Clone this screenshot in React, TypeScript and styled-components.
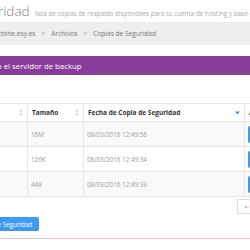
import { FC } from "react";
import styled, { createGlobalStyle } from "styled-components";

const GlobalStyle = createGlobalStyle`
  html, body {
    margin: 0;
    padding: 0;
    background: #fff;
    overflow: hidden;
  }
  body {
    font-family: "Open Sans", "DejaVu Sans", sans-serif;
    color: #555;
  }
`;

type Backup = {
  name: string;
  size: string;
  date: string;
};

const backups: Backup[] = [
  { name: "backup_full.tar.gz", size: "16M", date: "08/03/2016 12:49:56" },
  { name: "backup_db.sql.gz", size: "126K", date: "08/03/2016 12:49:34" },
  { name: "backup_mail.tar", size: "448", date: "08/03/2016 12:49:33" },
];

const Page = styled.div`
  margin-left: -95px;
  width: 440px;
`;

const TitleRow = styled.div`
  display: flex;
  align-items: baseline;
  gap: 5px;
  height: 22px;
  white-space: nowrap;
`;

const Title = styled.h1`
  margin: 0;
  font-size: 13.5px;
  line-height: 22px;
  font-weight: 300;
  color: #7d7d7d;
`;

const Subtitle = styled.span`
  font-size: 6.4px;
  color: #aaa;
`;

const Breadcrumb = styled.ol`
  display: flex;
  align-items: center;
  margin: 0;
  padding: 0 0 0 43px;
  height: 23px;
  list-style: none;
  background: #eeeeee;
  font-size: 6.6px;
  color: #777;
  white-space: nowrap;
`;

const Crumb = styled.li`
  & + &::before {
    content: ">";
    padding: 0 6px;
    color: #999;
  }
`;

const Panel = styled.section`
  margin-top: 11px;
  border: 1px solid #dec3e5;
  border-top: none;
`;

const PanelHeading = styled.div`
  height: 19px;
  display: flex;
  align-items: center;
  padding-left: 17px;
  background: #8a3c9a;
  color: #fff;
  font-size: 7.8px;
  white-space: nowrap;
`;

const PanelBody = styled.div`
  padding: 28px 7px 7px;
`;

const Table = styled.table`
  border-collapse: collapse;
  table-layout: fixed;
  width: 391px;
  font-size: 6.3px;
`;

const Th = styled.th`
  padding: 0 4px;
  height: 17px;
  border: 1px solid #e6e6e6;
  text-align: left;
  font-weight: 700;
  color: #333;
  font-size: 6.5px;
`;

const ThInner = styled.div`
  display: flex;
  align-items: center;
  justify-content: space-between;
  white-space: nowrap;
`;

const Row = styled.tr<{ $striped: boolean }>`
  background: ${({ $striped }) => ($striped ? "#f9f9f9" : "#fff")};
`;

const Td = styled.td`
  padding: 0 3px;
  height: 24px;
  border: 1px solid #e6e6e6;
  color: #999;
  white-space: nowrap;
`;

const ActionButton = styled.span`
  display: inline-flex;
  align-items: center;
  height: 17px;
  padding: 0 6px;
  border-radius: 2px;
  background-color: #3c99f5;
  color: #fff;
  font-size: 6.3px;
  vertical-align: middle;
`;

const Footer = styled.div`
  display: flex;
  justify-content: flex-end;
  margin-top: 2px;
  width: 433px;
`;

const Pager = styled.ul`
  display: flex;
  margin: 0;
  padding: 0;
  list-style: none;
`;

const PageItem = styled.li`
  height: 15px;
  display: flex;
  align-items: center;
  padding: 0 6px;
  border: 1px solid #ddd;
  box-sizing: border-box;
  font-size: 6.3px;
  color: #999;
  white-space: nowrap;

  & + & {
    border-left: none;
  }
`;

const CreateButton = styled.button`
  display: block;
  height: 14px;
  margin: 3px 0 0 10px;
  padding: 0 7px;
  border: none;
  border-radius: 2px;
  background: #3c99f5;
  color: #fff;
  font-family: inherit;
  font-size: 6.3px;
  white-space: nowrap;
`;

const SortBoth: FC = () => (
  <svg width="4" height="7" viewBox="0 0 4 7">
    <path d="M2 0 L4 2.6 L0 2.6 Z" fill="#d6d6d6" />
    <path d="M2 7 L4 4.4 L0 4.4 Z" fill="#d6d6d6" />
  </svg>
);

const SortDesc: FC = () => (
  <svg width="5" height="4" viewBox="0 0 5 4">
    <path d="M0 0.5 L5 0.5 L2.5 3.5 Z" fill="#4f8fdb" />
  </svg>
);

const App: FC = () => {
  return (
    <>
      <GlobalStyle />
      <Page>
        <TitleRow>
          <Title>Copias de Seguridad</Title>
          <Subtitle>
            lista de copias de respaldo disponibles para tu cuenta de hosting y
            base de datos
          </Subtitle>
        </TitleRow>
        <Breadcrumb>
          <Crumb>Inicio</Crumb>
          <Crumb>proyectohe.esy.es</Crumb>
          <Crumb>Archivos</Crumb>
          <Crumb>Copias de Seguridad</Crumb>
        </Breadcrumb>
        <Panel>
          <PanelHeading>Copias en tu cuenta o el servidor de backup</PanelHeading>
          <PanelBody>
            <Table>
              <colgroup>
                <col style={{ width: 114 }} />
                <col style={{ width: 56 }} />
                <col style={{ width: 161 }} />
                <col style={{ width: 60 }} />
              </colgroup>
              <thead>
                <tr>
                  <Th>
                    <ThInner>
                      Archivo <SortBoth />
                    </ThInner>
                  </Th>
                  <Th>
                    <ThInner>
                      Tamaño <SortBoth />
                    </ThInner>
                  </Th>
                  <Th>
                    <ThInner>
                      Fecha de Copia de Seguridad <SortDesc />
                    </ThInner>
                  </Th>
                  <Th>
                    <ThInner>Acciones</ThInner>
                  </Th>
                </tr>
              </thead>
              <tbody>
                {backups.map((b, i) => (
                  <Row key={b.date} $striped={i % 2 === 0}>
                    <Td>{b.name}</Td>
                    <Td>{b.size}</Td>
                    <Td>{b.date}</Td>
                    <Td>
                      <ActionButton>Descargar</ActionButton>
                    </Td>
                  </Row>
                ))}
              </tbody>
            </Table>
            <Footer>
              <Pager>
                <PageItem>← Anterior</PageItem>
                <PageItem>1</PageItem>
                <PageItem>Siguiente →</PageItem>
              </Pager>
            </Footer>
            <CreateButton>Generar nueva Copia de Seguridad</CreateButton>
          </PanelBody>
        </Panel>
      </Page>
    </>
  );
};

export default App;
